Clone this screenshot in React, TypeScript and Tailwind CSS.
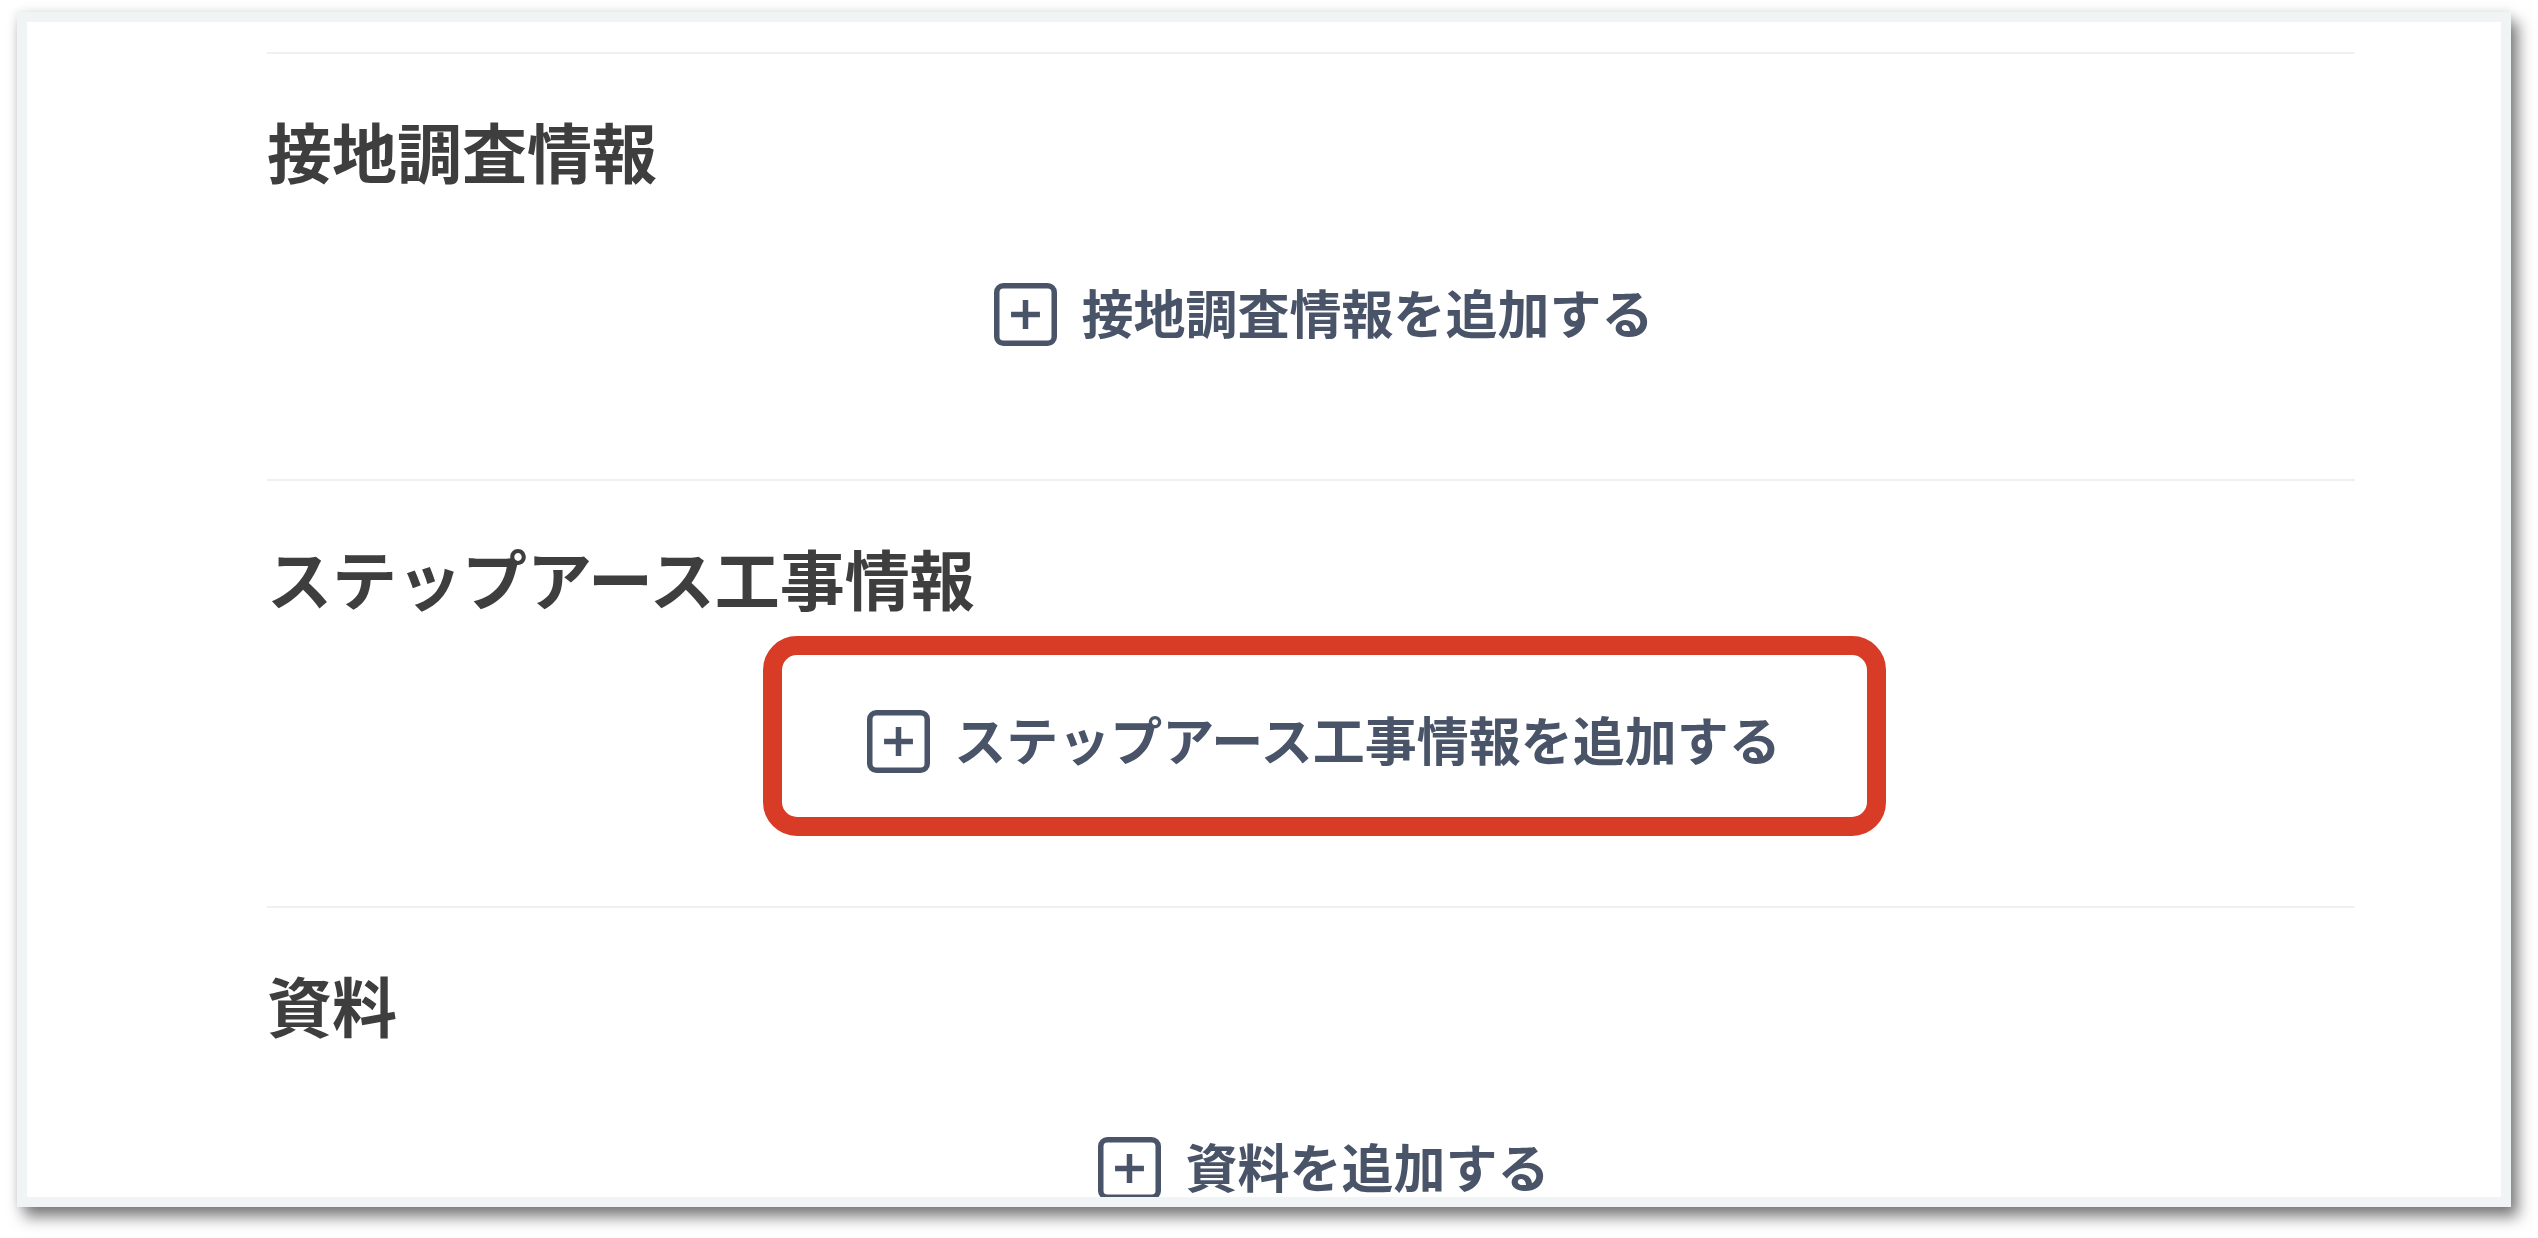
const sections = [
  { title: "接地調査情報", action: "接地調査情報を追加する", highlight: false },
  { title: "ステップアース工事情報", action: "ステップアース工事情報を追加する", highlight: true },
  { title: "資料", action: "資料を追加する", highlight: false },
];

function PlusSquareIcon() {
  return (
    <svg
      viewBox="0 0 24 24"
      className="h-[63px] w-[63px] shrink-0"
      fill="none"
      stroke="currentColor"
      strokeWidth={2.1}
    >
      <rect x="1.05" y="1.05" width="21.9" height="21.9" rx="2.5" />
      <path d="M12 6.5v11M6.5 12h11" />
    </svg>
  );
}

function AddButton({ label }: { label: string }) {
  return (
    <button type="button" className="flex items-center gap-[24px] text-[#4a5468]">
      <PlusSquareIcon />
      <span className="pb-[5px] text-[52px] font-semibold leading-none">{label}</span>
    </button>
  );
}

export default function App() {
  return (
    <div
      className="h-screen overflow-hidden bg-white pl-[17px] pt-[12px]"
      style={{ fontFamily: '"Noto Sans CJK JP", "Noto Sans", sans-serif' }}
    >
      <div className="h-[1195px] w-[2494px] overflow-hidden border-[10px] border-[#f1f4f4] bg-white shadow-[7px_10px_14px_rgba(0,0,0,0.5),0_0_10px_rgba(0,0,0,0.1)]">
        <div className="ml-[240px] w-[2088px] pt-[30px]">
          {sections.map((s) => (
            <section key={s.title} className="border-t-2 border-[#eef0f3] pb-[133px] pt-[64px]">
              <h2 className="text-[65px] font-bold leading-none text-[#3e3e3e]">{s.title}</h2>
              <div className="mt-[100px] flex justify-center pl-[26px]">
                <div className="relative">
                  <AddButton label={s.action} />
                  {/* annotation highlight */}
                  {s.highlight && (
                    <span className="pointer-events-none absolute -bottom-[63px] -left-[104px] -right-[105px] -top-[74px] rounded-[34px] border-[19px] border-[#d83b26]" />
                  )}
                </div>
              </div>
            </section>
          ))}
        </div>
      </div>
    </div>
  );
}
